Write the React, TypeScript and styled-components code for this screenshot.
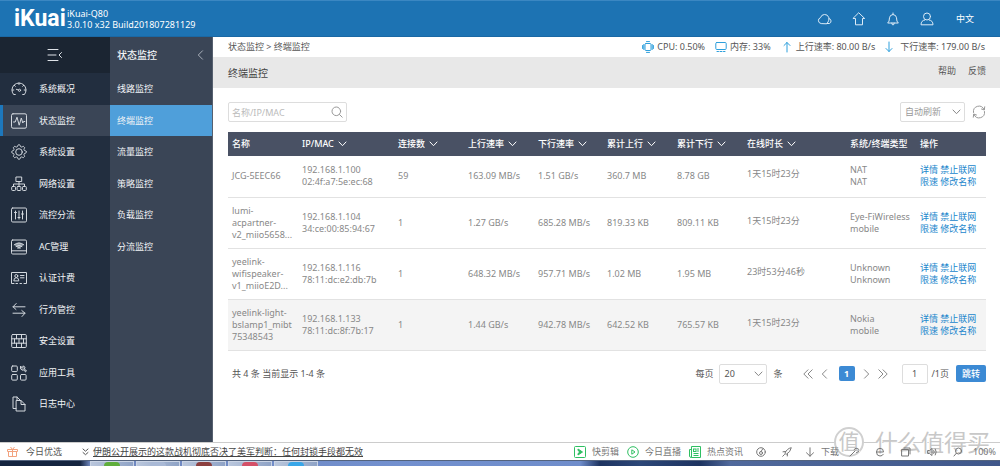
import React from "react";
import styled, { createGlobalStyle, css } from "styled-components";

const GlobalStyle = createGlobalStyle`
  *, *::before, *::after { box-sizing: border-box; }
  body {
    margin: 0;
    background: #fff;
    color: #555;
    font: 9px/12px "Noto Sans", "Noto Sans CJK SC", sans-serif;
  }
  button, input, select { font: inherit; color: inherit; margin: 0; }
  button { border: 0; padding: 0; background: none; cursor: pointer; }
  a { color: inherit; text-decoration: none; }
  ul { list-style: none; margin: 0; padding: 0; }
  svg { display: block; flex: none; }
`;

const Page = styled.div`
  display: flex;
  flex-direction: column;
  min-height: 100vh;
`;

/* ---------- top bar ---------- */

const TopBar = styled.header`
  display: flex;
  align-items: center;
  height: 37px;
  padding: 0 26px 0 14px;
  background: #1d73b3;
  border-top: 1px solid #3b87c2;
  border-bottom: 1px solid #1a68a4;
  color: #fff;
`;

const Logo = styled.a`
  width: 53px;
  font: 700 23px/24px Roboto, sans-serif;
`;

const Version = styled.div`
  flex: 1;
  line-height: 11px;
`;

const TopActions = styled.nav`
  display: flex;
  align-items: center;
  gap: 18px;
  color: #dcebf7;
`;

const IconButton = styled.button`
  display: grid;
  place-items: center;
  width: 16px;
  height: 16px;
`;

const RefreshButton = styled(IconButton)`
  width: 14px;
  margin-left: 7px;
`;

const Language = styled.button`
  margin-left: 3px;
  color: #fff;
`;

/* ---------- side menus ---------- */

const Body = styled.div`
  display: flex;
  flex: 1;
`;

const menuRow = css`
  display: flex;
  align-items: center;
  height: 31px;
  li:nth-child(odd) > & { height: 32px; }
`;

const MainMenu = styled.nav`
  flex: none;
  width: 110px;
  background: #222e3f;
  color: #f2f4f6;
`;

const Collapse = styled.button`
  display: grid;
  place-items: center;
  width: 100%;
  height: 36px;
  background: #1b2532;
  color: #dfe3e8;
`;

const MainItem = styled.a<{ $active?: boolean }>`
  ${menuRow}
  gap: 12px;
  padding-left: 8px;
  border-left: 3px solid ${(p) => (p.$active ? "#1d78bd" : "transparent")};
  background: ${(p) => (p.$active ? "#3a4556" : "transparent")};
  svg { color: #d3d8de; }
`;

const SubMenu = styled.nav`
  flex: none;
  width: 103px;
  background: #3a4556;
  border-right: 1px solid #56606f;
  color: #f2f4f6;
`;

const SubTitle = styled.h2`
  display: flex;
  align-items: center;
  justify-content: space-between;
  height: 36px;
  margin: 0;
  padding: 0 8px 0 7px;
  font-size: 10px;
  font-weight: 500;
  svg { color: #a9b0ba; }
`;

const SubItem = styled.a<{ $active?: boolean }>`
  ${menuRow}
  padding-left: 7px;
  background: ${(p) => (p.$active ? "#4f9fda" : "transparent")};
`;

/* ---------- content ---------- */

const Content = styled.main`
  flex: 1;
  min-width: 0;
`;

const InfoBar = styled.div`
  display: flex;
  align-items: center;
  justify-content: space-between;
  height: 20px;
  padding: 0 15px;
`;

const Stats = styled.ul`
  display: flex;
  gap: 10px;
`;

const Stat = styled.li`
  display: flex;
  align-items: center;
  gap: 3px;
  svg { color: #2d9fdc; }
`;

const TitleBar = styled.div`
  display: flex;
  align-items: center;
  height: 31px;
  padding: 0 14px 0 15px;
  background: #e8e8e8;
`;

const Title = styled.h1`
  flex: 1;
  margin: 0;
  color: #444;
  font-size: 10px;
  font-weight: 400;
`;

const TitleLink = styled.a`
  margin-left: 12px;
  padding-bottom: 3px;
`;

const Panel = styled.section`
  padding: 14px 14px 0 15px;
`;

const Toolbar = styled.div`
  display: flex;
  align-items: center;
  height: 20px;
  margin-bottom: 10px;
  color: #999;
`;

const SearchBox = styled.form`
  display: flex;
  align-items: center;
  width: 119px;
  height: 20px;
  margin-right: auto;
  padding: 0 3px;
  border: 1px solid #ddd;
  border-radius: 2px;
`;

const SearchInput = styled.input`
  flex: 1;
  min-width: 0;
  height: 18px;
  padding: 0;
  border: 0;
  outline: 0;
  background: none;
  &::placeholder { color: #bbb; opacity: 1; }
`;

const SelectBox = styled.div<{ $width: number }>`
  display: grid;
  align-items: center;
  width: ${(p) => p.$width}px;
  height: 20px;
  border: 1px solid #ddd;
  border-radius: 2px;
  background: #fff;
  > * { grid-area: 1 / 1; }
  > svg { justify-self: end; margin-right: 3px; color: #888; pointer-events: none; }
`;

const Select = styled.select`
  width: 100%;
  height: 18px;
  padding: 0 16px 0 4px;
  border: 0;
  outline: 0;
  appearance: none;
  background: transparent;
`;

const Table = styled.table`
  width: 100%;
  table-layout: fixed;
  border-collapse: collapse;
  color: #888;
`;

const Col = styled.col<{ $width: number }>`
  width: ${(p) => p.$width}px;
`;

const HeadCell = styled.th`
  height: 24px;
  padding: 0 0 0 4px;
  background: #495164;
  color: #fff;
  font-weight: 500;
  text-align: left;
  white-space: nowrap;
`;

const SortButton = styled.button`
  display: flex;
  align-items: center;
  gap: 4px;
`;

const Row = styled.tr<{ $tall?: boolean; $shaded?: boolean }>`
  height: ${(p) => (p.$tall ? 51 : 41)}px;
  background: ${(p) => (p.$shaded ? "#f4f4f4" : "#fff")};
  border-bottom: 1px solid #e2e2e2;
`;

const Cell = styled.td<{ $raised?: boolean }>`
  padding: 0 0 ${(p) => (p.$raised ? 4 : 0)}px 4px;
  white-space: pre;
`;

const RowLink = styled.a`
  color: #2186cc;
`;

const Pager = styled.div`
  display: flex;
  align-items: center;
  margin-top: 13px;
  height: 20px;
`;

const Summary = styled.span`
  flex: 1;
  padding-left: 4px;
`;

const PageSize = styled.label`
  display: flex;
  align-items: center;
  gap: 6px;
`;

const PageNav = styled.nav`
  display: flex;
  align-items: center;
  gap: 8px;
  margin: 0 14px 0 20px;
  color: #888;
`;

const CurrentPage = styled.button`
  width: 16px;
  height: 15px;
  margin-left: 3px;
  border-radius: 2px;
  background: #3c8ad4;
  color: #fff;
  font-weight: 700;
`;

const PageInput = styled.input`
  width: 26px;
  height: 20px;
  margin-right: 4px;
  padding: 0;
  border: 1px solid #ddd;
  border-radius: 2px;
  text-align: center;
`;

const Jump = styled.button`
  width: 30px;
  height: 17px;
  margin-left: 7px;
  border-radius: 2px;
  background: #3c8ad4;
  color: #fff;
  font-weight: 500;
`;

/* ---------- browser status bar and taskbar ---------- */

const StatusBar = styled.footer`
  position: relative;
  z-index: 0;
  display: flex;
  align-items: center;
  height: 18px;
  padding: 0 4px 0 7px;
  border-top: 1px solid #ccc;
  background: #fff;
`;

const Picks = styled.a`
  display: flex;
  align-items: center;
  gap: 8px;
  margin-right: 20px;
`;

const News = styled.a`
  flex: 1;
  margin-left: 4px;
  color: #444;
  text-decoration: underline;
`;

const Tools = styled.div`
  display: flex;
  align-items: center;
  gap: 8px;
  color: #777;
`;

const Tool = styled.button`
  display: flex;
  align-items: center;
  gap: 6px;
`;

const SmallTools = styled.div<{ $gap: number }>`
  display: flex;
  align-items: center;
  gap: ${(p) => p.$gap}px;
  margin: 0 2px;
`;

/* Sits above the bar's background and below its labels. */
const Watermark = styled.div`
  position: absolute;
  z-index: -1;
  right: 10px;
  bottom: 3px;
  display: flex;
  align-items: center;
  gap: 11px;
  color: #c8c8c8;
  font-size: 23px;
  line-height: 28px;
  text-shadow: 1px 1px 0 #fff, -1px -1px 0 #fff;
  pointer-events: none;
`;

const Seal = styled.span`
  width: 30px;
  height: 30px;
  border: 2px solid #d0d0d0;
  border-radius: 50%;
  background: #fff;
  font-size: 21px;
  line-height: 25px;
  text-align: center;
`;

const TaskBar = styled.div`
  display: flex;
  gap: 2px;
  height: 6px;
  padding-left: 90px;
  border-top: 1px solid #53637e;
  background: linear-gradient(90deg, #14243f 0 8%, #6e86bd 9%, #7290cf 40%, #6f8dcb 58%, #1d3360 60%, #2c4778 64%, #1d3360 70%, #50699c 73%, #3f578a 100%);
`;

const TaskButton = styled.span<{ $tint: string }>`
  display: grid;
  justify-content: center;
  width: 44px;
  border: 1px solid #c9d3e4;
  border-bottom: 0;
  background: linear-gradient(90deg, #b9c6dc, #8fa3c6);
  &::after {
    content: "";
    width: 16px;
    height: 4px;
    border-radius: 8px 8px 0 0;
    background: ${(p) => p.$tint};
  }
`;

/* ---------- icons ---------- */

type IconProps = { w?: number; h?: number; children: React.ReactNode };
const Icon = ({ w = 16, h = 16, children }: IconProps) => (
  <svg width={w} height={h} viewBox={`0 0 ${w} ${h}`} fill="none" stroke="currentColor" strokeWidth={1} strokeLinecap="round" strokeLinejoin="round" aria-hidden="true">
    {children}
  </svg>
);

const ChevronDown = () => <Icon w={9} h={6}><path d="M1 1l3.500 3.700L8 1" /></Icon>;
const DoubleLeft = () => <Icon w={10} h={10}><path d="M5 .8L.8 5 5 9.200M9.200 .8L5 5l4.200 4.200" /></Icon>;
const DoubleRight = () => <Icon w={10} h={10}><path d="M5 .8L9.200 5 5 9.200M.8 .8L5 5 .8 9.200" /></Icon>;
const Left = () => <Icon w={7} h={10}><path d="M5.500 .8L1.300 5l4.200 4.200" /></Icon>;
const Right = () => <Icon w={7} h={10}><path d="M1.500 .8L5.700 5 1.500 9.200" /></Icon>;

const gear = Array.from({ length: 64 }, (_, i) => {
  const a = (i / 64) * Math.PI * 2;
  const r = 6.4 + Math.max(-0.8, Math.min(0.8, Math.cos(a * 8) * 1.6));
  return `${(8 + r * Math.cos(a)).toFixed(2)},${(8 + r * Math.sin(a)).toFixed(2)}`;
}).join(" ");

const mainMenu: { label: string; icon: React.ReactNode }[] = [
  { label: "系统概况", icon: <Icon><path d="M4.300 13.500H2.600A7 7 0 1 1 13.400 13.500H11.700M1.200 9h1.600M13.200 9h1.600M3.300 4.300l1 1M12.700 4.300l-1 1M8 2v1.500M5.300 8.300l2.200.7" /><circle cx="8.500" cy="9.300" r="1.100" /></Icon> },
  { label: "状态监控", icon: <Icon><rect x="0.500" y="0.800" width="15" height="14.400" rx="1.500" /><path d="M2.500 9h1.700L6 4.200l2.200 8L10.300 5l1.500 5 .8-1.500h1.200" /></Icon> },
  { label: "系统设置", icon: <Icon><polygon points={gear} /><circle cx="8" cy="8" r="3.300" /></Icon> },
  { label: "网络设置", icon: <Icon><rect x="5.300" y="1" width="5.400" height="4.500" /><path d="M8 5.500v5M2.500 10.500V8h11v2.500" /><rect x="0.700" y="10.500" width="3.800" height="4" rx=".8" /><rect x="6.100" y="10.500" width="3.800" height="4" rx=".8" /><rect x="11.500" y="10.500" width="3.800" height="4" rx=".8" /></Icon> },
  { label: "流控分流", icon: <Icon><rect x="0.500" y="1" width="15" height="14" rx="1.200" /><path d="M4.500 4v8M8 4v8M11.500 4v8M3.500 5.500h2M7 10.500h2M10.500 7h2" /></Icon> },
  { label: "AC管理", icon: <Icon><rect x="0.500" y="1" width="15" height="14" rx="1.200" /><path d="M.5 11.800h15" /><path d="M3.200 5.800Q8 1.600 12.800 5.800L8 10z" fill="currentColor" fillOpacity=".65" stroke="none" /><path d="M3.200 5.800Q8 1.800 12.800 5.800M5 7.500q3-2.500 6 0M6.700 9q1.300-1 2.600 0" /></Icon> },
  { label: "认证计费", icon: <Icon><path d="M3 13.500H.5v-11h15v11H13M5 13.500h1.500M9 13.500h1.500" /><circle cx="5.300" cy="6" r="1.500" /><path d="M2.800 10.500q0-2.800 2.500-2.800t2.500 2.800zM9.500 5.500H13M9.500 7.800H13" /></Icon> },
  { label: "行为管控", icon: <Icon><path d="M14 4.800H2M5.200 1.500L2 4.800 5 7.500M2 11.200h12M10.800 8.500l3.200 2.700-3 3.300" /></Icon> },
  { label: "安全设置", icon: <Icon><rect x="0.700" y="1.500" width="14.600" height="13" rx="1" /><path d="M.7 5.800h14.600M.7 10.200h14.600M5.500 1.500v4.300M10.500 1.500v4.300M3.500 5.800v4.400M8 5.800v4.400M12.500 5.800v4.400M5.500 10.200v4.300M10.500 10.200v4.300" /></Icon> },
  { label: "应用工具", icon: <Icon><rect x="0.700" y="1" width="5.600" height="5.600" rx="1" /><rect x="0.700" y="9.500" width="5.600" height="5.600" rx="1" /><rect x="9.500" y="9.500" width="5.600" height="5.600" rx="1" /><path d="M9.500 1.500v2.300l1.800 1.400 1.300-.3 2 2 .9-.9-2-2 .4-1.700-1.500-1.500-1 1.600-1.200-.4z" fill="currentColor" fillOpacity=".4" /></Icon> },
  { label: "日志中心", icon: <Icon><path d="M5 12.500H2V1h4l3 3M6 1v3.500" /><path d="M5.500 4.500H10l4 4V15H5.500zM10 4.500v4h4" /></Icon> },
];

const subMenu = ["线路监控", "终端监控", "流量监控", "策略监控", "负载监控", "分流监控"];

const columns: { label: string; width: number; sortable?: boolean }[] = [
  { label: "名称", width: 70 },
  { label: "IP/MAC", width: 96, sortable: true },
  { label: "连接数", width: 70, sortable: true },
  { label: "上行速率", width: 70, sortable: true },
  { label: "下行速率", width: 69, sortable: true },
  { label: "累计上行", width: 70, sortable: true },
  { label: "累计下行", width: 70, sortable: true },
  { label: "在线时长", width: 103, sortable: true },
  { label: "系统/终端类型", width: 70 },
  { label: "操作", width: 70 },
];

const rows = [
  ["JCG-5EEC66", "192.168.1.100\n02:4f:a7:5e:ec:68", "59", "163.09 MB/s", "1.51 GB/s", "360.7 MB", "8.78 GB", "1天15时23分", "NAT\nNAT"],
  ["lumi-\nacpartner-\nv2_miio5658...", "192.168.1.104\n34:ce:00:85:94:67", "1", "1.27 GB/s", "685.28 MB/s", "819.33 KB", "809.11 KB", "1天15时23分", "Eye-FiWireless\nmobile"],
  ["yeelink-\nwifispeaker-\nv1_miioE2D...", "192.168.1.116\n78:11:dc:e2:db:7b", "1", "648.32 MB/s", "957.71 MB/s", "1.02 MB", "1.95 MB", "23时53分46秒", "Unknown\nUnknown"],
  ["yeelink-light-\nbslamp1_mibt\n75348543", "192.168.1.133\n78:11:dc:8f:7b:17", "1", "1.44 GB/s", "942.78 MB/s", "642.52 KB", "765.57 KB", "1天15时23分", "Nokia\nmobile"],
];

const taskTints = ["#5fae3c", "#a9b9d6", "#8c3f3f", "#d45068", "#38a6e8"];

export default function App() {
  return (
    <Page>
      <GlobalStyle />
      <TopBar>
        <Logo href="#">iKuai</Logo>
        <Version>iKuai-Q80<br />3.0.10 x32 Build201807281129</Version>
        <TopActions>
          <IconButton aria-label="云服务"><Icon><path d="M3.800 12.500a3 3 0 0 1-.3-5.800 4.300 4.300 0 0 1 8.200-.4c.6 1.700.2 4-1.700 6.200zM12 7.500a2.600 2.600 0 0 1 .3 5H10" /></Icon></IconButton>
          <IconButton aria-label="首页"><Icon><path d="M8 2l5.700 5.500h-2.200v6.300h-7V7.500H2.300z" /></Icon></IconButton>
          <IconButton aria-label="通知"><Icon><path d="M3 11.800q1.500-1 1.500-5Q4.700 4 8 3.500q3.300.5 3.500 3.300 0 4 1.500 5zM8 3.500V2M6.800 12q0 2 1.200 2t1.200-2" /></Icon></IconButton>
          <IconButton aria-label="用户"><Icon><circle cx="8" cy="5.500" r="3.500" /><path d="M5.800 9Q2 9.500 2 13.800h12Q14 9.500 10.200 9" /></Icon></IconButton>
          <Language>中文</Language>
        </TopActions>
      </TopBar>

      <Body>
        <MainMenu>
          <Collapse aria-label="收起菜单"><Icon w={16} h={14}><path d="M1 1.500h10M1 7h8M1 12.500h10M14.500 4.500L12 7l2.500 2.500" /></Icon></Collapse>
          <ul>
            {mainMenu.map((m) => (
              <li key={m.label}><MainItem href="#" $active={m.label === "状态监控"}>{m.icon}{m.label}</MainItem></li>
            ))}
          </ul>
        </MainMenu>
        <SubMenu>
          <SubTitle>状态监控<Left /></SubTitle>
          <ul>
            {subMenu.map((m) => (
              <li key={m}><SubItem href="#" $active={m === "终端监控"}>{m}</SubItem></li>
            ))}
          </ul>
        </SubMenu>

        <Content>
          <InfoBar>
            <span>状态监控 &gt; 终端监控</span>
            <Stats>
              <Stat><Icon w={12} h={12}><rect x="3" y="2.500" width="6" height="7" rx="1" /><path d="M.6 4.500v3M11.400 4.500v3M1.800 3.500v5M10.200 3.500v5M4.500 .6h3M4.500 11.400h3" /></Icon>CPU: 0.50%</Stat>
              <Stat><Icon w={12} h={12}><rect x="0.800" y="1.500" width="10.400" height="7" rx="1" /><path d="M2 10.500h1.500M5 10.500h2M8.500 10.500H10" /></Icon>内存: 33%</Stat>
              <Stat><Icon w={12} h={12}><path d="M6 11V1.500M3 4.500l3-3 3 3" /></Icon>上行速率: 80.00 B/s</Stat>
              <Stat><Icon w={12} h={12}><path d="M4 1v9.500M1 7.500l3 3 3-3" /></Icon>下行速率: 179.00 B/s</Stat>
            </Stats>
          </InfoBar>
          <TitleBar>
            <Title>终端监控</Title>
            <TitleLink href="#">帮助</TitleLink>
            <TitleLink href="#">反馈</TitleLink>
          </TitleBar>

          <Panel>
            <Toolbar>
              <SearchBox>
                <SearchInput aria-label="搜索" placeholder="名称/IP/MAC" />
                <button type="button" aria-label="搜索"><Icon w={12} h={12}><circle cx="5.300" cy="5.300" r="4.300" /><path d="M8.500 8.500l2.700 2.700" /></Icon></button>
              </SearchBox>
              <SelectBox $width={65}>
                <Select aria-label="刷新方式"><option>自动刷新</option></Select>
                <ChevronDown />
              </SelectBox>
              <RefreshButton aria-label="刷新"><Icon w={14} h={14}><path d="M1.500 7.500A5.500 5.500 0 0 1 12 4.500M12.500 6.500A5.500 5.500 0 0 1 2 9.500M12.700 1.800L12.300 5 9.500 4M1.300 12.200L1.700 9l2.800 1" /></Icon></RefreshButton>
            </Toolbar>

            <Table>
              <colgroup>{columns.map((c) => <Col key={c.label} $width={c.width} />)}</colgroup>
              <thead>
                <tr>
                  {columns.map((c) => (
                    <HeadCell key={c.label} scope="col">
                      {c.sortable ? <SortButton>{c.label}<ChevronDown /></SortButton> : c.label}
                    </HeadCell>
                  ))}
                </tr>
              </thead>
              <tbody>
                {rows.map((r, i) => (
                  <Row key={r[0]} $tall={i > 0} $shaded={i === 3}>
                    {r.map((v, j) => <Cell key={j} $raised={j === 7}>{v}</Cell>)}
                    <Cell>
                      <RowLink href="#">详情</RowLink> <RowLink href="#">禁止联网</RowLink>{"\n"}
                      <RowLink href="#">限速</RowLink> <RowLink href="#">修改名称</RowLink>
                    </Cell>
                  </Row>
                ))}
              </tbody>
            </Table>

            <Pager>
              <Summary>共 4 条 当前显示 1-4 条</Summary>
              <PageSize>
                每页
                <SelectBox $width={48}>
                  <Select defaultValue="20"><option>20</option></Select>
                  <ChevronDown />
                </SelectBox>
                条
              </PageSize>
              <PageNav aria-label="分页">
                <button aria-label="首页"><DoubleLeft /></button>
                <button aria-label="上一页"><Left /></button>
                <CurrentPage>1</CurrentPage>
                <button aria-label="下一页"><Right /></button>
                <button aria-label="末页"><DoubleRight /></button>
              </PageNav>
              <PageInput aria-label="页码" defaultValue="1" />
              /1页
              <Jump>跳转</Jump>
            </Pager>
          </Panel>
        </Content>
      </Body>

      <StatusBar>
        <Picks href="#">
          <svg width="11" height="11" viewBox="0 0 11 11" fill="none" stroke="#f2a27e" aria-hidden="true"><path d="M.5 3.500h10v2H.5zM1.500 5.500v5h8v-5M5.500 3.500v7M5.500 3.500L3.500 1M5.500 3.500l2-2.500" /></svg>
          今日优选
        </Picks>
        <Icon w={7} h={8}><path d="M1 1l2.500 2.200L6 1M1 4.500l2.500 2.200L6 4.500" /></Icon>
        <News href="#">伊朗公开展示的这款战机彻底否决了美军判断：任何封锁手段都无效</News>
        <Tools>
          <Tool><svg width="12" height="12" viewBox="0 0 12 12" fill="none" stroke="#2fbf62" aria-hidden="true"><rect x="0.500" y="0.500" width="11" height="11" rx="1" /><path d="M4 3l4.500 3L4 9V7.500L6 6 4 4.500z" fill="#2fbf62" /></svg>快剪辑</Tool>
          <Tool><svg width="12" height="12" viewBox="0 0 12 12" fill="none" stroke="#2fbf62" aria-hidden="true"><circle cx="6" cy="6" r="5.300" /><path d="M4.800 3.800L8 6 4.800 8.200z" /></svg>今日直播</Tool>
          <Tool><svg width="12" height="12" viewBox="0 0 12 12" fill="none" stroke="#2fbf62" aria-hidden="true"><path d="M2.500 11.500h9V.5h-9zM2.500 3.500h-2v6.500q0 1.500 2 1.500M4.500 7.500h5M4.500 9.500h5" /><rect x="4.500" y="3" width="2.500" height="2.500" /><path d="M8 3h2M8 5h2" /></svg>热点资讯</Tool>
          <SmallTools $gap={10}>
            <IconButton aria-label="加速"><Icon w={10} h={10}><circle cx="5" cy="5" r="4.300" /><circle cx="5" cy="6" r="1.500" /><path d="M5 4.500L7 1.500" /></Icon></IconButton>
            <IconButton aria-label="火箭"><Icon w={10} h={10}><path d="M3 6Q5 1.500 9.300 .7 8.500 5 4.500 7.200zM3.500 4.500L1 4.800M5.500 6.800L5.300 9M2.500 7.500L.7 9.300" /></Icon></IconButton>
          </SmallTools>
          <Tool><Icon w={10} h={10}><path d="M5 .8v8.400M1.500 5.800L5 9.200l3.500-3.400" /></Icon>下载</Tool>
          <SmallTools $gap={16}>
            <Icon w={10} h={10}><path d="M1 9l5-5M5 2.500Q7 0 9.500 2T7.500 5.500" /></Icon>
            <Icon w={10} h={10}><path d="M1.500 5h7Q8.500 1.300 5 1.300T1.500 5Q1.500 9 5 9q2.500 0 3.300-1.700" /></Icon>
            <Icon w={10} h={10}><rect x="1" y="2.500" width="6.500" height="6.500" /><path d="M3 1h6v6" /></Icon>
            <Icon w={10} h={10}><path d="M1 3.500h1.500L5 1.500v7L2.500 6.500H1zM6.800 3.500q1 1.500 0 3M8.300 2q2 3 0 6" /></Icon>
            <Icon w={10} h={10}><circle cx="5.500" cy="4" r="3" /><path d="M3.300 6.300L1 9" /></Icon>
          </SmallTools>
          <span>100%</span>
        </Tools>
        <Watermark><Seal>值</Seal>什么值得买</Watermark>
      </StatusBar>
      <TaskBar>{taskTints.map((t) => <TaskButton key={t} $tint={t} />)}</TaskBar>
    </Page>
  );
}
